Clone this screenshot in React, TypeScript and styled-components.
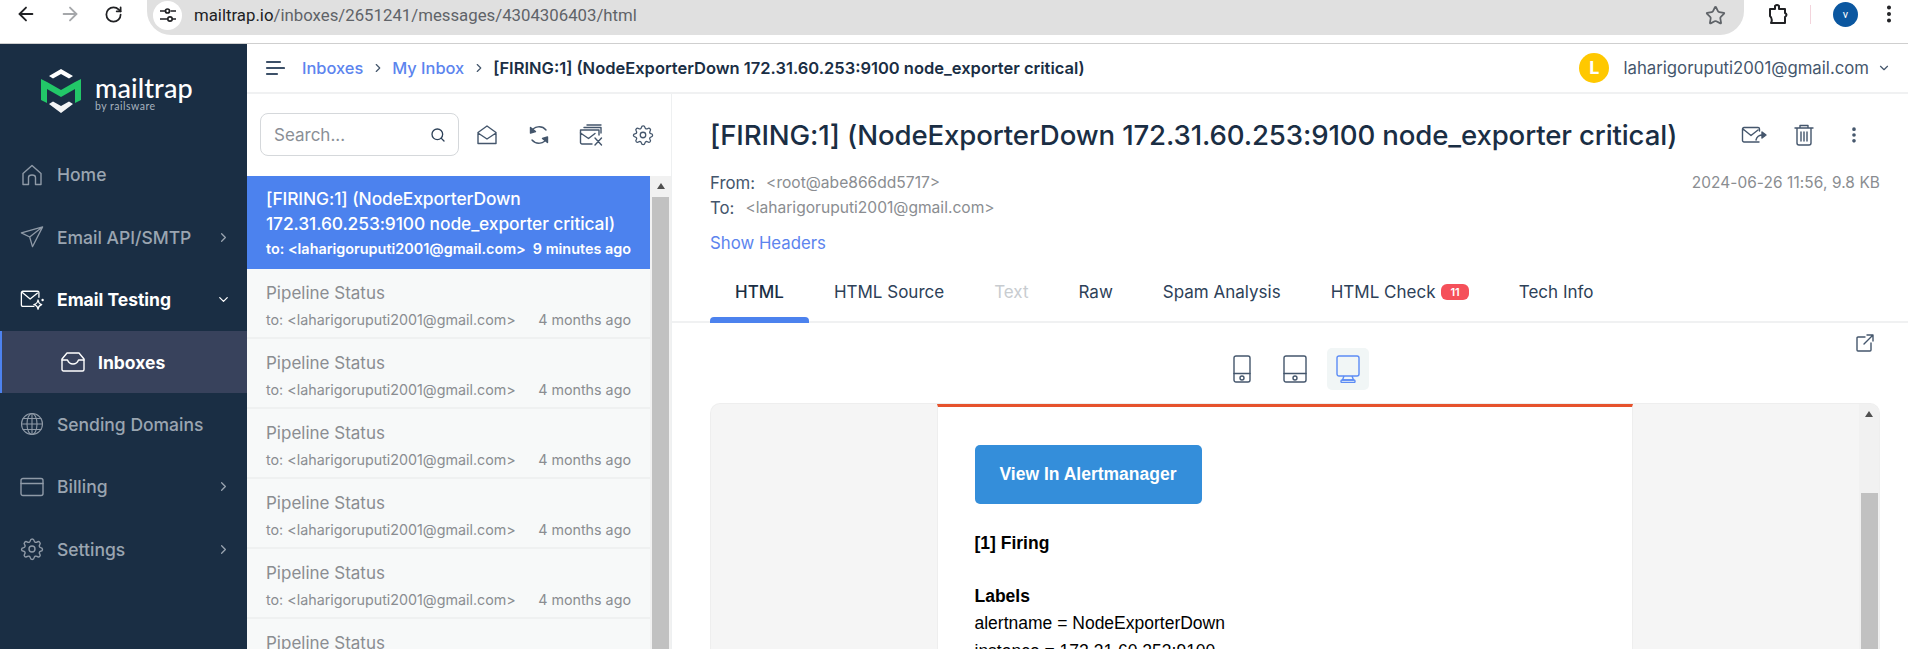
import React from 'react'
import styled, { createGlobalStyle } from 'styled-components'
import { ArrowLeft, ArrowRight, ChevronDown, ChevronRight, EllipsisVertical, RotateCw, Search, Star } from 'lucide-react'

const GlobalStyle = createGlobalStyle`
	html, body {
		margin: 0;
		height: 100%;
		overflow: hidden;
		background: #fff;
		font-family: Inter, 'Liberation Sans', sans-serif;
	}
	* { box-sizing: border-box; }
`

const Page = styled.div`
	width: 1908px;
	height: 649px;
	display: flex;
	flex-direction: column;
	overflow: hidden;
`

/* browser chrome */
const BrowserBar = styled.header`
	flex: none;
	height: 44px;
	display: flex;
	align-items: flex-start;
	background: #fff;
	border-bottom: 1px solid #cfcfcf;
	padding-left: 15px;
`

const NavIcon = styled.span<{ $w: number; $color?: string }>`
	flex: none;
	width: ${({ $w }) => $w}px;
	height: 28px;
	display: flex;
	align-items: center;
	color: ${({ $color }) => $color || '#202124'};
`

const AddressBar = styled.div`
	flex: 1;
	min-width: 0;
	height: 35px;
	padding: 0 18px 5px 6px;
	display: flex;
	align-items: center;
	background: #e0e0e0;
	border-radius: 0 0 24px 24px;
`

const SiteBadge = styled.span`
	flex: none;
	width: 29px;
	height: 29px;
	margin-right: 12px;
	border-radius: 50%;
	background: #fff;
	display: flex;
	align-items: center;
	justify-content: center;
`

const Url = styled.span`
	flex: 1;
	font-family: Roboto, sans-serif;
	font-size: 16.8px;
	color: #5f6368;
	b {
		font-weight: 400;
		color: #202124;
	}
`

const BrowserTools = styled.div`
	flex: none;
	width: 164px;
	height: 28px;
	display: flex;
	align-items: center;
	padding-left: 22px;
`

const ToolDivider = styled.span`
	width: 1px;
	height: 19px;
	margin: 0 22px 0 20px;
	background: #f3d4dc;
`

const ProfileDot = styled.span`
	width: 25px;
	height: 25px;
	border-radius: 50%;
	background: #0b57a0;
	color: #fff;
	font-family: Roboto, sans-serif;
	font-size: 11px;
	display: flex;
	align-items: center;
	justify-content: center;
	margin-right: 20px;
`

const Shell = styled.div`
	flex: 1;
	min-height: 0;
	display: flex;
`

/* sidebar */
const Sidebar = styled.aside`
	flex: none;
	width: 247px;
	background: #1a2e44;
	display: flex;
	flex-direction: column;
`

const Brand = styled.div`
	height: 99.5px;
	padding: 24px 0 0 41px;
	display: flex;
	gap: 14px;
`

const BrandText = styled.div`
	display: flex;
	flex-direction: column;
	padding-top: 7px;
`

const BrandName = styled.span`
	font-family: Lato, sans-serif;
	font-size: 27px;
	line-height: 26px;
	font-weight: 500;
	color: #fff;
	letter-spacing: 0.1px;
`

const BrandSub = styled.span`
	font-family: Lato, sans-serif;
	font-size: 10.5px;
	line-height: 10px;
	color: #a7b2bf;
	letter-spacing: 0.5px;
`

const NavList = styled.nav`
	display: flex;
	flex-direction: column;
`

const NavRow = styled.div<{ $on?: boolean }>`
	height: 62.5px;
	display: flex;
	align-items: center;
	padding: 0 16px 0 20px;
	color: ${({ $on }) => ($on ? '#fff' : '#9aa5b1')};
	font-size: 17.5px;
	font-weight: ${({ $on }) => ($on ? 700 : 500)};
`

const SubRow = styled.div`
	position: relative;
	height: 62px;
	display: flex;
	align-items: center;
	padding-left: 61px;
	background: #38425c;
	color: #fff;
	font-size: 17.5px;
	font-weight: 700;
	&::before {
		content: '';
		position: absolute;
		left: 0;
		top: 0;
		bottom: 0;
		width: 2px;
		background: #4d82ee;
	}
`

const NavGlyph = styled.span`
	flex: none;
	width: 24px;
	height: 28px;
	margin-right: 13px;
	display: flex;
	align-items: center;
	justify-content: center;
`

const NavLabel = styled.span`
	flex: 1;
`

/* main */
const Main = styled.main`
	flex: 1;
	min-width: 0;
	display: flex;
	flex-direction: column;
`

const TopBar = styled.div`
	flex: none;
	height: 50px;
	display: flex;
	align-items: center;
	padding: 0 17px 1px 18px;
	border-bottom: 2px solid #f0f1f2;
`

const MenuIcon = styled.svg`
	flex: none;
	margin-right: 17px;
`

const Crumb = styled.span`
	font-size: 16.4px;
	font-weight: 500;
	color: #5c84ee;
`

const CrumbSep = styled.span`
	margin: 0 7px 0 8px;
	display: flex;
	color: #44566c;
`

const CrumbCurrent = styled.span`
	flex: 1;
	font-size: 16.5px;
	font-weight: 600;
	color: #1a2e44;
`

const Avatar = styled.span`
	width: 30px;
	height: 30px;
	border-radius: 50%;
	background: #ffc800;
	color: #fff;
	font-weight: 700;
	font-size: 18px;
	display: flex;
	align-items: center;
	justify-content: center;
	margin-right: 14px;
`

const Account = styled.span`
	font-size: 16.75px;
	color: #44566c;
	margin-right: 8px;
`

const Content = styled.div`
	flex: 1;
	min-height: 0;
	display: flex;
`

/* inbox list */
const ListPanel = styled.section`
	flex: none;
	width: 425px;
	display: flex;
	flex-direction: column;
	border-right: 1px solid #eef0f1;
`

const ListTools = styled.div`
	flex: none;
	height: 82px;
	display: flex;
	align-items: flex-start;
	padding: 19px 0 0 13px;
`

const SearchBox = styled.div`
	flex: none;
	width: 199px;
	height: 43px;
	border: 1px solid #d5d8db;
	border-radius: 8px;
	display: flex;
	align-items: center;
	justify-content: space-between;
	padding: 0 12px 0 13px;
	font-size: 17px;
	color: #8a8f96;
	margin-right: 2px;
`

const ToolIcon = styled.span`
	flex: none;
	width: 52px;
	height: 43px;
	display: flex;
	align-items: center;
	justify-content: center;
`

const ListBody = styled.div`
	flex: 1;
	min-height: 0;
	display: flex;
`

const Rows = styled.div`
	flex: 1;
	min-width: 0;
	overflow: hidden;
`

const Selected = styled.div`
	height: 93px;
	padding: 10px 19px 0 19px;
	background: #4c82ee;
	color: #fff;
	font-weight: 500;
`

const SelectedTitle = styled.div`
	font-size: 17.4px;
	line-height: 25px;
	letter-spacing: -0.1px;
`

const RowMeta = styled.div<{ $selected?: boolean }>`
	display: flex;
	justify-content: space-between;
	font-size: ${({ $selected }) => ($selected ? 14.4 : 14.3)}px;
	font-weight: ${({ $selected }) => ($selected ? 600 : 400)};
	line-height: 25px;
	white-space: nowrap;
	color: ${({ $selected }) => ($selected ? '#fff' : '#8a8d91')};
`

const Row = styled.div`
	height: 70px;
	padding: 11px 19px 0 19px;
	background: #f7f9f9;
	border-bottom: 2px solid #eff1f1;
`

const RowTitle = styled.div`
	font-size: 17px;
	line-height: 26px;
	color: #8a8d91;
	margin-bottom: 1px;
`

const Scrollbar = styled.div`
	flex: none;
	width: 21px;
	background: #f1f1f1;
	display: flex;
	flex-direction: column;
	align-items: center;
`

const ScrollArrow = styled.span`
	flex: none;
	height: 21px;
	padding-top: 7px;
	&::before {
		content: '';
		display: block;
		border: 4px solid transparent;
		border-top: 0;
		border-bottom: 6px solid #505050;
	}
`

const ScrollThumb = styled.span`
	flex: 1;
	width: 17px;
	background: #c1c1c1;
`

/* message */
const Detail = styled.section`
	flex: 1;
	min-width: 0;
	display: flex;
	flex-direction: column;
	overflow: hidden;
`

const DetailHead = styled.div`
	flex: none;
	padding: 0 28px 0 38px;
`

const TitleRow = styled.div`
	height: 76px;
	display: flex;
	align-items: center;
	padding-top: 6px;
`

const Title = styled.h1`
	flex: 1;
	margin: 0;
	font-size: 27.6px;
	line-height: 34px;
	font-weight: 500;
	color: #1a2e44;
	letter-spacing: -0.13px;
	white-space: nowrap;
`

const TitleTools = styled.div`
	display: flex;
	gap: 20px;
	margin-right: 11px;
`

const TitleTool = styled.span`
	width: 30px;
	height: 30px;
	display: flex;
	align-items: center;
	justify-content: center;
`

const MetaRow = styled.div`
	height: 25px;
	display: flex;
	align-items: center;
	font-size: 16.8px;
	color: #44566c;
`

const MetaValue = styled.span`
	flex: 1;
	margin-left: 11px;
	font-size: 15.6px;
	color: #8a8d91;
`

const MetaDate = styled.span`
	font-size: 15.4px;
	color: #8a8d91;
	letter-spacing: 0.1px;
`

const ShowHeaders = styled.div`
	font-size: 16.8px;
	color: #5c84ee;
	margin-top: 11px;
	line-height: 24px;
`

const Tabs = styled.div`
	flex: none;
	height: 56px;
	margin-top: 12px;
	display: flex;
	padding-left: 38px;
	border-bottom: 2px solid #f0f1f2;
`

const Tab = styled.div<{ $active?: boolean; $off?: boolean }>`
	position: relative;
	padding: 0 25px;
	height: 54px;
	line-height: 50px;
	display: flex;
	align-items: flex-start;
	font-size: 17px;
	font-weight: ${({ $active }) => ($active ? 500 : 400)};
	color: ${({ $active, $off }) => ($active ? '#1a2e44' : $off ? '#c8ccd0' : '#2d4158')};
	&::after {
		content: '';
		display: ${({ $active }) => ($active ? 'block' : 'none')};
		position: absolute;
		left: 0;
		right: 0;
		bottom: -2px;
		height: 6px;
		border-radius: 4px 4px 0 0;
		background: #4c82ee;
	}
`

const Badge = styled.span`
	height: 16px;
	margin: 17px 0 0 6px;
	padding: 0 9px;
	border-radius: 6px;
	background: #f5505a;
	color: #fff;
	font-size: 11px;
	font-weight: 600;
	line-height: 16px;
`

const PreviewArea = styled.div`
	flex: 1;
	min-height: 0;
	display: flex;
	flex-direction: column;
	padding: 0 28px 0 38px;
`

const DeviceRow = styled.div`
	position: relative;
	flex: none;
	height: 80px;
	display: flex;
	justify-content: center;
	gap: 11px;
	padding-top: 25px;
`

const DeviceButton = styled.span<{ $on?: boolean }>`
	width: 42px;
	height: 42px;
	border-radius: 5px;
	background: ${({ $on }) => ($on ? '#f1f6f6' : 'transparent')};
	display: flex;
	align-items: center;
	justify-content: center;
`

const PopOut = styled.span`
	position: absolute;
	right: 5px;
	top: 10px;
	display: flex;
`

const Frame = styled.div`
	flex: 1;
	min-height: 0;
	display: flex;
	background: #f5f5f5;
	border: 1px solid #eeeeee;
	border-bottom: 0;
	border-radius: 10px 10px 0 0;
	overflow: hidden;
`

const FrameInner = styled.div`
	flex: 1;
	display: flex;
	justify-content: center;
	min-width: 0;
	padding-right: 1px;
`

const Email = styled.article`
	width: 696px;
	background: #fff;
	border-top: 3px solid #e6522c;
	border-left: 1px solid #eeeeee;
	border-right: 1px solid #eeeeee;
	padding: 38px 37px;
	font-family: Arial, 'Liberation Sans', sans-serif;
	font-size: 17.5px;
	color: #000;
`

const AlertButton = styled.div`
	width: 227px;
	height: 59px;
	border-radius: 5px;
	background: #348eda;
	color: #fff;
	font-weight: 700;
	display: flex;
	align-items: center;
	justify-content: center;
`

const EmailHeading = styled.div<{ $gap: number }>`
	font-weight: 700;
	line-height: 20px;
	margin-top: ${({ $gap }) => $gap}px;
`

const EmailLine = styled.div`
	line-height: 24px;
	margin-top: 5px;
	& + & {
		margin-top: 4px;
	}
`

const FrameScroll = styled(Scrollbar)`
	width: 20px;
`

const FrameThumb = styled.span`
	flex: 1;
	width: 17px;
	margin-top: 68px;
	background: #c1c1c1;
`

const ink = '#44566c'

const svgProps = { fill: 'none', stroke: ink, strokeWidth: 1.4, strokeLinecap: 'round', strokeLinejoin: 'round' } as const
const navSvg = (c: string) => ({ fill: 'none', stroke: c, strokeWidth: 1.4, strokeLinecap: 'round', strokeLinejoin: 'round' } as const)

const Logo = () => (
	<svg width="40" height="46" viewBox="0 0 40 46">
		<path d="M20 1 L32 8 L28 10.5 L20 6 L12 10.5 L8 8 Z" fill="#fff" />
		<path d="M0 11 L6 14 L20 22 L34 14 L40 11 V32 L34 35 V21 L20 29 L6 21 V35 L0 32 Z" fill="#22c768" />
		<path d="M8 36 L12 33.5 L20 38 L28 33.5 L32 36 L20 45 Z" fill="#f4f5f6" />
	</svg>
)

const HomeIcon = () => (
	<svg width="24" height="24" viewBox="0 0 24 24" {...navSvg('#8f9aa7')}>
		<path d="M3 10.5 L12 2.5 L21 10.5 V21.5 H15.5 V14.5 Q15.5 12 12 12 Q8.5 12 8.5 14.5 V21.5 H3 Z" />
	</svg>
)

const SendIcon = () => (
	<svg width="26" height="26" viewBox="0 0 26 26" {...navSvg('#8f9aa7')}>
		<path d="M1.5 8.5 L24.5 2 L13.5 23.5 L10.5 13 Z M10.5 13 L24.5 2" />
	</svg>
)

const TestingIcon = () => (
	<svg width="26" height="24" viewBox="0 0 26 24" {...navSvg('#fff')}>
		<path d="M15 19 H3 A1.5 1.5 0 0 1 1.5 17.5 V4 A1.5 1.5 0 0 1 3 2.5 H19 A1.5 1.5 0 0 1 20.5 4 V9" />
		<path d="M2.5 4 L11 11 L19 4.5" />
		<path d="M19.5 12 Q20 16 23.5 17 Q20 18 19.5 22 Q19 18 15 17 Q19 16 19.5 12 Z" />
		<circle cx="24.5" cy="12" r="0.6" />
	</svg>
)

const InboxIcon = () => (
	<svg width="24" height="20" viewBox="0 0 24 20" {...navSvg('#fff')}>
		<path d="M6 1 H18 L23 7 V17.5 A1.5 1.5 0 0 1 21.5 19 H2.5 A1.5 1.5 0 0 1 1 17.5 V7 Z" />
		<path d="M1 8 H6.5 Q8 12 12 12 Q16 12 17.5 8 H23" />
	</svg>
)

const GlobeIcon = () => (
	<svg width="24" height="24" viewBox="0 0 24 24" {...navSvg('#8f9aa7')} strokeWidth={1.1}>
		<circle cx="12" cy="12" r="10.5" />
		<ellipse cx="12" cy="12" rx="5" ry="10.5" />
		<path d="M12 1.5 V22.5 M1.5 12 H22.5 M3 6.5 H21 M3 17.5 H21" />
	</svg>
)

const CardIcon = () => (
	<svg width="24" height="20" viewBox="0 0 24 20" {...navSvg('#8f9aa7')}>
		<rect x="1" y="1.5" width="22" height="17" rx="2" />
		<path d="M1 6.5 H23" />
	</svg>
)

const GearIcon = ({ size, color }: { size: number; color: string }) => (
	<svg width={size} height={size} viewBox="0 0 24 24" {...navSvg(color)}>
		<circle cx="12" cy="12" r="3" />
		<path d="M12.2 2 C13.6 2 14 2.8 14.2 4 C14.4 5.2 15.8 5.8 16.9 5.1 C18 4.4 18.8 4.2 19.7 5.2 C20.7 6.2 20.4 7 19.6 8 C18.9 9 19.4 10.4 20.6 10.6 C21.8 10.8 22.5 11.2 22.5 12.4 C22.5 13.6 21.8 14 20.6 14.2 C19.4 14.4 18.9 15.8 19.6 16.8 C20.4 17.8 20.6 18.6 19.7 19.5 C18.8 20.4 18 20.2 16.9 19.4 C15.8 18.7 14.4 19.3 14.2 20.5 C14 21.7 13.4 22.5 12.2 22.5 C11 22.5 10.4 21.7 10.2 20.5 C10 19.3 8.6 18.7 7.5 19.4 C6.4 20.2 5.6 20.4 4.7 19.5 C3.8 18.6 4 17.8 4.8 16.8 C5.5 15.8 5 14.4 3.8 14.2 C2.6 14 1.5 13.6 1.5 12.4 C1.5 11.2 2.6 10.8 3.8 10.6 C5 10.4 5.5 9 4.8 8 C4 7 3.7 6.2 4.7 5.2 C5.6 4.2 6.4 4.4 7.5 5.1 C8.6 5.8 10 5.2 10.2 4 C10.4 2.8 10.8 2 12.2 2 Z" />
	</svg>
)

const navItems = [
	{ label: 'Home', icon: <HomeIcon /> },
	{ label: 'Email API/SMTP', icon: <SendIcon />, chevron: 'right' },
	{ label: 'Email Testing', icon: <TestingIcon />, chevron: 'down', on: true },
	{ label: 'Inboxes', sub: true },
	{ label: 'Sending Domains', icon: <GlobeIcon /> },
	{ label: 'Billing', icon: <CardIcon />, chevron: 'right' },
	{ label: 'Settings', icon: <GearIcon size={24} color="#8f9aa7" />, chevron: 'right' },
]

const tabs = ['HTML', 'HTML Source', 'Text', 'Raw', 'Spam Analysis', 'HTML Check', 'Tech Info']

export default function App() {
	return (
		<Page>
			<GlobalStyle />
			<BrowserBar>
				<NavIcon $w={44}><ArrowLeft size={22} strokeWidth={2} /></NavIcon>
				<NavIcon $w={45} $color="#a5a7aa"><ArrowRight size={22} strokeWidth={2} /></NavIcon>
				<NavIcon $w={43}><RotateCw size={19} strokeWidth={2.2} /></NavIcon>
				<AddressBar>
					<SiteBadge>
						<svg width="18" height="18" viewBox="0 0 18 18" fill="none" stroke="#202124" strokeWidth="1.7">
							<path d="M1 5 H6 M11.5 5 H17 M1 13 H8 M14 13 H17" />
							<circle cx="8.5" cy="5" r="2" />
							<circle cx="11" cy="13" r="2.2" />
						</svg>
					</SiteBadge>
					<Url><b>mailtrap.io</b>/inboxes/2651241/messages/4304306403/html</Url>
					<Star size={21} color="#5f6368" strokeWidth={2} />
				</AddressBar>
				<BrowserTools>
					<svg width="24" height="24" viewBox="0 0 24 24" fill="none" stroke="#202124" strokeWidth="2" strokeLinejoin="round">
						<path d="M4 7 H9 V4 Q11 2 13 4 V7 H19 V11 Q22 12.5 19 15 V21 H5 Q7 17 4 14 Z" />
					</svg>
					<ToolDivider />
					<ProfileDot>v</ProfileDot>
					<EllipsisVertical size={22} color="#202124" strokeWidth={2.4} />
				</BrowserTools>
			</BrowserBar>
			<Shell>
				<Sidebar>
					<Brand>
						<Logo />
						<BrandText>
							<BrandName>mailtrap</BrandName>
							<BrandSub>by railsware</BrandSub>
						</BrandText>
					</Brand>
					<NavList>
						{navItems.map((item) =>
							item.sub ? (
								<SubRow key={item.label}>
									<NavGlyph><InboxIcon /></NavGlyph>
									{item.label}
								</SubRow>
							) : (
								<NavRow key={item.label} $on={item.on}>
									<NavGlyph>{item.icon}</NavGlyph>
									<NavLabel>{item.label}</NavLabel>
									{item.chevron === 'right' && <ChevronRight size={15} />}
									{item.chevron === 'down' && <ChevronDown size={15} />}
								</NavRow>
							),
						)}
					</NavList>
				</Sidebar>
				<Main>
					<TopBar>
						<MenuIcon width="20" height="16" viewBox="0 0 20 16" stroke="#3c5068" strokeWidth="2.2" strokeLinecap="round">
							<path d="M2 2 H15 M2 8 H19 M2 14 H12" />
						</MenuIcon>
						<Crumb>Inboxes</Crumb>
						<CrumbSep><ChevronRight size={14} /></CrumbSep>
						<Crumb>My Inbox</Crumb>
						<CrumbSep><ChevronRight size={14} /></CrumbSep>
						<CrumbCurrent>[FIRING:1] (NodeExporterDown 172.31.60.253:9100 node_exporter critical)</CrumbCurrent>
						<Avatar>L</Avatar>
						<Account>laharigoruputi2001@gmail.com</Account>
						<ChevronDown size={14} color={ink} />
					</TopBar>
					<Content>
						<ListPanel>
							<ListTools>
								<SearchBox>Search...<Search size={16} color="#2d4158" /></SearchBox>
								<ToolIcon>
									<svg width="22" height="22" viewBox="0 0 22 22" {...svgProps}>
										<path d="M2 8.5 L11 2 L20 8.5 V19.5 H2 Z M2 9 L11 15 L20 9" />
									</svg>
								</ToolIcon>
								<ToolIcon>
									<svg width="22" height="22" viewBox="0 0 22 22" {...svgProps}>
										<path d="M3 8 A9 9 0 0 1 18 6 M19 14 A9 9 0 0 1 4 16" />
										<path d="M2.5 3.5 L7.5 7.5 L2.5 9 Z M19.5 18.5 L14.5 14.5 L19.5 13 Z" fill={ink} />
									</svg>
								</ToolIcon>
								<ToolIcon>
									<svg width="24" height="22" viewBox="0 0 24 22" {...svgProps}>
										<path d="M1.5 9 V6 H20 V11 M5 3.5 H22 V9 M8 1 H22" />
										<path d="M13 20 H3 A1.5 1.5 0 0 1 1.5 18.5 V9 M1.5 9 L9.5 14.5 L16 9.5 M16 14 L22.5 21 M22.5 14 L16 21" />
									</svg>
								</ToolIcon>
								<ToolIcon><GearIcon size={22} color={ink} /></ToolIcon>
							</ListTools>
							<ListBody>
								<Rows>
									<Selected>
										<SelectedTitle>[FIRING:1] (NodeExporterDown<br />172.31.60.253:9100 node_exporter critical)</SelectedTitle>
										<RowMeta $selected><span>to: &lt;laharigoruputi2001@gmail.com&gt;</span><span>9 minutes ago</span></RowMeta>
									</Selected>
									{[0, 1, 2, 3, 4, 5].map((i) => (
										<Row key={i}>
											<RowTitle>Pipeline Status</RowTitle>
											<RowMeta><span>to: &lt;laharigoruputi2001@gmail.com&gt;</span><span>4 months ago</span></RowMeta>
										</Row>
									))}
								</Rows>
								<Scrollbar>
									<ScrollArrow />
									<ScrollThumb />
								</Scrollbar>
							</ListBody>
						</ListPanel>
						<Detail>
							<DetailHead>
								<TitleRow>
									<Title>[FIRING:1] (NodeExporterDown 172.31.60.253:9100 node_exporter critical)</Title>
									<TitleTools>
										<TitleTool>
											<svg width="26" height="20" viewBox="0 0 26 20" {...svgProps}>
												<path d="M18 17 H3 A1.5 1.5 0 0 1 1.5 15.5 V4 A1.5 1.5 0 0 1 3 2.5 H17 A1.5 1.5 0 0 1 18.5 4 V6 M2 4 L10 10.5 L17 5 M15 15 Q16 10 22 10" />
												<path d="M21 7 L25 10 L21 13 Z" fill={ink} />
											</svg>
										</TitleTool>
										<TitleTool>
											<svg width="20" height="22" viewBox="0 0 20 22" {...svgProps}>
												<path d="M1 4 H19 M6 4 V1.5 H14 V4 M3 4 V19 A2 2 0 0 0 5 21 H15 A2 2 0 0 0 17 19 V4 M7 8 V17 M10 8 V17 M13 8 V17" />
											</svg>
										</TitleTool>
										<TitleTool><EllipsisVertical size={20} color={ink} strokeWidth={2.4} /></TitleTool>
									</TitleTools>
								</TitleRow>
								<MetaRow>From:<MetaValue>&lt;root@abe866dd5717&gt;</MetaValue><MetaDate>2024-06-26 11:56, 9.8 KB</MetaDate></MetaRow>
								<MetaRow>To:<MetaValue>&lt;laharigoruputi2001@gmail.com&gt;</MetaValue></MetaRow>
								<ShowHeaders>Show Headers</ShowHeaders>
							</DetailHead>
							<Tabs>
								{tabs.map((t) => (
									<Tab key={t} $active={t === 'HTML'} $off={t === 'Text'}>
										{t}
										{t === 'HTML Check' && <Badge>11</Badge>}
									</Tab>
								))}
							</Tabs>
							<PreviewArea>
								<DeviceRow>
									<DeviceButton>
										<svg width="18" height="28" viewBox="0 0 18 28" {...svgProps}>
											<rect x="1" y="1" width="16" height="26" rx="2" />
											<path d="M1 18.5 H17" />
											<circle cx="9" cy="23" r="2" />
										</svg>
									</DeviceButton>
									<DeviceButton>
										<svg width="24" height="28" viewBox="0 0 24 28" {...svgProps}>
											<rect x="1" y="1" width="22" height="26" rx="2" />
											<path d="M1 18.5 H23" />
											<circle cx="12" cy="23" r="2" />
										</svg>
									</DeviceButton>
									<DeviceButton $on>
										<svg width="24" height="28" viewBox="0 0 24 28" fill="none" stroke="#5c8cf5" strokeWidth="1.4" strokeLinejoin="round">
											<rect x="1" y="1" width="22" height="20" rx="2" />
											<path d="M8 21 L6.5 25 H17.5 L16 21" />
											<rect x="5" y="25" width="14" height="2.5" rx="1" />
										</svg>
									</DeviceButton>
									<PopOut>
										<svg width="20" height="20" viewBox="0 0 20 20" {...svgProps}>
											<path d="M10 4 H3 A1 1 0 0 0 2 5 V17 A1 1 0 0 0 3 18 H15 A1 1 0 0 0 16 17 V10 M9 11 L18 2 M12 2 H18 V8" />
										</svg>
									</PopOut>
								</DeviceRow>
								<Frame>
									<FrameInner>
										<Email>
											<AlertButton>View In Alertmanager</AlertButton>
											<EmailHeading $gap={29}>[1] Firing</EmailHeading>
											<EmailHeading $gap={33}>Labels</EmailHeading>
											<EmailLine>alertname = NodeExporterDown</EmailLine>
											<EmailLine>instance = 172.31.60.253:9100</EmailLine>
										</Email>
									</FrameInner>
									<FrameScroll>
										<ScrollArrow />
										<FrameThumb />
									</FrameScroll>
								</Frame>
							</PreviewArea>
						</Detail>
					</Content>
				</Main>
			</Shell>
		</Page>
	)
}
